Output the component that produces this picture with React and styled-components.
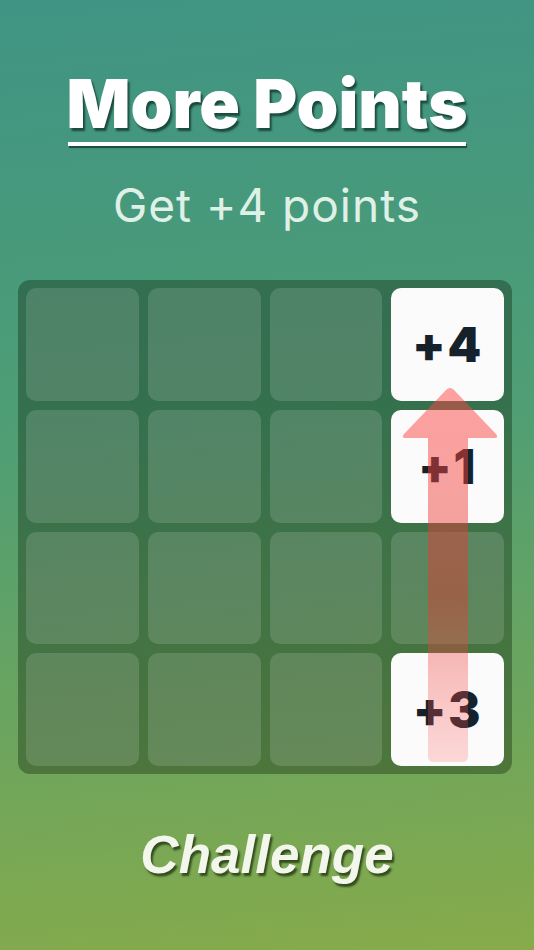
import React from "react";
import styled, { createGlobalStyle } from "styled-components";

const GlobalStyle = createGlobalStyle`
  html, body {
    margin: 0;
    padding: 0;
  }
  body {
    font-family: Inter, "Liberation Sans", sans-serif;
  }
`;

const Screen = styled.div`
  width: 534px;
  height: 950px;
  background: linear-gradient(175deg, #3f9484 0%, #4f9e74 45%, #87ab4a 100%);
  display: flex;
  flex-direction: column;
  align-items: center;
  overflow: hidden;
`;

const Title = styled.h1`
  margin: 68px 0 0;
  font-family: Inter, "Liberation Sans", sans-serif;
  font-weight: 900;
  font-size: 67px;
  line-height: 72px;
  letter-spacing: 0;
  color: #ffffff;
  text-shadow: 2px 3px 2px rgba(20, 60, 50, 0.85);
`;

const Underline = styled.div`
  width: 398px;
  height: 4px;
  margin-top: 2px;
  background: #ffffff;
  box-shadow: 1px 2px 1px rgba(20, 60, 50, 0.85);
`;

const Subtitle = styled.p`
  margin: 32px 0 0;
  font-family: Inter, "Liberation Sans", sans-serif;
  font-weight: 400;
  font-size: 46px;
  line-height: 54px;
  letter-spacing: 1px;
  color: #dff0e6;
`;

const Board = styled.div`
  position: relative;
  margin: 48px 4px 0 0;
  width: 494px;
  height: 494px;
  box-sizing: border-box;
  padding: 8px;
  border-radius: 12px;
  background: rgba(10, 30, 5, 0.35);
  display: grid;
  grid-template-columns: repeat(4, 1fr);
  grid-template-rows: repeat(4, 1fr);
  gap: 9px;
`;

const Cell = styled.div`
  border-radius: 10px;
  background: ${(p) => (p.$value ? "#fbfbfb" : "rgba(255, 255, 255, 0.14)")};
  display: flex;
  align-items: center;
  justify-content: center;
  font-family: Inter, "Liberation Sans", sans-serif;
  font-weight: 900;
  font-size: 48px;
  color: #16222b;
  letter-spacing: 2px;
`;

const ArrowLayer = styled.svg`
  position: absolute;
  left: 0;
  top: 0;
  pointer-events: none;
`;

const Footer = styled.div`
  margin-top: 50px;
  font-family: "Liberation Sans", Arial, sans-serif;
  font-weight: 700;
  font-style: italic;
  font-size: 53px;
  color: #f3f6ea;
  text-shadow: 2px 3px 2px rgba(40, 60, 20, 0.85);
`;

const cells = [
  null, null, null, "+4",
  null, null, null, "+1",
  null, null, null, null,
  null, null, null, "+3",
];

export default function App() {
  return (
    <Screen>
      <GlobalStyle />
      <Title>More Points</Title>
      <Underline />
      <Subtitle>Get +4 points</Subtitle>
      <Board>
        {cells.map((v, i) => (
          <Cell key={i} $value={v}>
            {v}
          </Cell>
        ))}
        <ArrowLayer width="494" height="494" viewBox="0 0 494 494">
          <defs>
            <linearGradient id="arrowFill" x1="0" y1="0" x2="0" y2="1">
              <stop offset="0" stopColor="rgb(255,70,70)" stopOpacity="0.5" />
              <stop offset="0.55" stopColor="rgb(225,55,45)" stopOpacity="0.45" />
              <stop offset="1" stopColor="rgb(255,90,90)" stopOpacity="0.22" />
            </linearGradient>
          </defs>
          <path
            d="M410 158 L410 476 Q410 482 416 482 L444 482 Q450 482 450 476 L450 158 L476 158 Q481 158 478 154 L436 110 Q432 106 428 110 L386 154 Q383 158 388 158 Z"
            fill="url(#arrowFill)"
          />
        </ArrowLayer>
      </Board>
      <Footer>Challenge</Footer>
    </Screen>
  );
}
